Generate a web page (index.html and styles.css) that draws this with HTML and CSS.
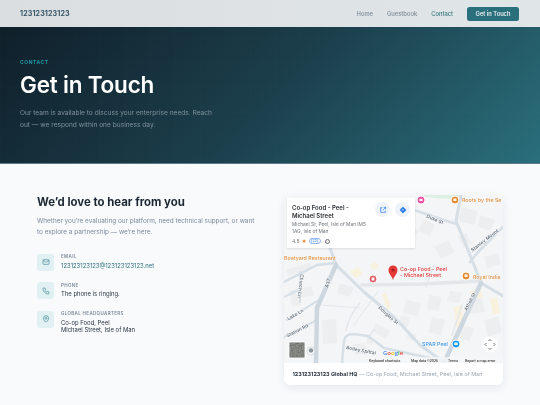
FILE: index.html
```html
<!DOCTYPE html>
<html lang="en">
<head>
<meta charset="utf-8">
<title>Contact</title>
<link rel="stylesheet" href="styles.css">
</head>
<body>
<header class="nav">
  <div class="brand">123123123123</div>
  <nav class="links">
    <a>Home</a>
    <a>Guestbook</a>
    <a class="active">Contact</a>
    <a class="cta">Get in Touch</a>
  </nav>
</header>
<section class="hero">
  <div class="eyebrow">CONTACT</div>
  <h1>Get in Touch</h1>
  <p>Our team is available to discuss your enterprise needs. Reach out — we respond within one business day.</p>
</section>
<main class="content">
  <div class="info">
    <h2>We’d love to hear from you</h2>
    <p class="lead">Whether you’re evaluating our platform, need technical support, or want to explore a partnership — we’re here.</p>
    <div class="items">
      <div class="item">
        <span class="ico"><svg viewBox="0 0 24 24"><rect x="3" y="5" width="18" height="14" rx="2"/><path d="M3 7l9 6 9-6"/></svg></span>
        <div><div class="lbl">EMAIL</div><div class="val link">123123123123@123123123123.net</div></div>
      </div>
      <div class="item">
        <span class="ico"><svg viewBox="0 0 24 24"><path d="M5 3h4l2 5-2.500 2a12 12 0 0 0 5.500 5.500L16 13l5 2v4a2 2 0 0 1-2 2A16 16 0 0 1 3 5a2 2 0 0 1 2-2z"/></svg></span>
        <div><div class="lbl">PHONE</div><div class="val">The phone is ringing.</div></div>
      </div>
      <div class="item">
        <span class="ico"><svg viewBox="0 0 24 24"><path d="M12 22s8-6.500 8-12a8 8 0 0 0-16 0c0 5.500 8 12 8 12z"/><circle cx="12" cy="10" r="3"/></svg></span>
        <div><div class="lbl">GLOBAL HEADQUARTERS</div><div class="val">Co-op Food, Peel<br>Michael Street, Isle of Man</div></div>
      </div>
    </div>
  </div>
  <div class="card">
    <div class="map">
      <svg class="mapsvg" viewBox="0 0 219 168">
        <defs>
          <filter id="sat" x="0" y="0" width="100%" height="100%">
            <feTurbulence type="fractalNoise" baseFrequency=".7" numOctaves="2" seed="4"/>
            <feColorMatrix values="0 0 0 0 .3  0 0 0 0 .31  0 0 0 0 .29  1.200 0 0 0 0"/>
            <feComposite in2="SourceGraphic" operator="over"/>
          </filter>
        </defs>
        <rect width="219" height="168" fill="#f4f5f6"/>
        <path d="M135 0h42l-5 3q-18 2-37-3z" fill="#dcefe3"/>
        <g fill="#eceef0">
          <path d="M178 12l16 4-4 14-16-4zM197 20l14 5-5 11-13-5zM150 52l14-7 7 12-14 7zM174 42l8-4 6 11-8 4zM200 62l14-4 3 11-14 4zM140 24l-6 12 12 5 5-11zM126 30l9 5-4 8-9-5z"/>
          <path d="M122 105l15 3-3 13-15-3zM145 100l12 2-2 14-12-2zM148 122l13 3-4 15-13-3zM117 120l9 3-3 10-9-3zM178 130l12 3-4 13-12-3zM182 105l16-2 3 14-16 2zM200 126l14-5 4 16-14 5zM125 137l8 3-3 6-8-3zM166 96l12 2-3 10-12-2z"/>
          <path d="M5 96l22-5 3 9-22 5zM2 75l24-8 2 6-24 8zM56 88l14 4-4 10-13-4zM6 104l8-2 3 8-8 2zM68 150l12-2 3 10-12 2zM92 128l14 8-4 8-14-8zM38 125l14-1 1 24-14 1zM84 142l6 2-2 6-6-2z"/>
        </g>
        <g fill="#f8f1de"><path d="M66 76l8-4 5 7-8 4zM86 70l6-3 3 5-6 3zM186 96l10-2 3 8-10 2zM206 104l7-2 3 16-7 2zM170 112l8-2 2 20-8 2zM98 100l4-3 5 15-4 3z"/></g>
        <g fill="none" stroke-linecap="round" stroke-linejoin="round">
          <g stroke="#e4e7ea">
            <path stroke-width="3.500" d="M78 90l60-1 59-3"/>
            <path stroke-width="1" d="M38 110l38 3M94 96l-24 34"/>
            <path stroke-width="1.500" d="M76 108q-12 14-14 28"/>
            <path stroke-width="1.500" d="M90 135l-6 8M150 70l-8 22M178 110l-10 30"/>
          </g>
          <g stroke="#d6dee6">
            <path stroke-width="3" d="M52 70l28 27 30 25 26 28 25 18"/>
            <path stroke-width="2.500" d="M0 87l33-17 19-2"/>
            <path stroke-width="3" d="M52 70l-6-17"/>
            <path stroke-width="3" d="M197 88l-13-33-12-29 5-26"/>
            <path stroke-width="3" d="M197 88l22 13"/>
            <path stroke-width="2.500" d="M130 15l42 14"/>
            <path stroke-width="2.500" d="M220 31l-26 26-8 10"/>
            <path stroke-width="2.500" d="M58 168l2-22q1-7 10-7l14 2 16 12 46 10"/>
            <path stroke-width="2" d="M0 142l33-17M3 125l30-19M16 77v30M0 102l16-8"/>
          </g>
          <path stroke="#cdd7e0" stroke-width="4.500" d="M52 70l-19 43-1 55"/>
          <path stroke="#cdd7e0" stroke-width="4.500" d="M197 88l-37 80"/>
        </g>
        <g class="road-lbl">
          <text transform="translate(142 22.500) rotate(22)">Duke St</text>
          <text transform="translate(188.500 57) rotate(-38)">Stanley Mount</text>
          <text transform="translate(183 116) rotate(-63)">Atholl St</text>
          <text transform="translate(16.500 79) rotate(97)">Church Ln</text>
          <text transform="translate(44 93) rotate(-75)">A37</text>
          <text transform="translate(4.500 125.500) rotate(-30)">Lake Ln</text>
          <text transform="translate(3.500 142.500) rotate(-27)">Station Rd</text>
          <text transform="translate(94 113) rotate(42)">Douglas St</text>
          <text transform="translate(62 154) rotate(11)">Bolley Spittal</text>
        </g>
        <g class="poi-o">
          <text x="0" y="65">Boatyard Restaurant</text>
          <text x="178" y="7">Roots by the Se</text>
          <text x="189" y="84">Royal India</text>
        </g>
        <g class="poi-r"><text x="116" y="75.500">Co-op Food - Peel</text><text x="116" y="81.500">- Michael Street</text></g>
        <text class="poi-b" x="138" y="151">SPAR Peel</text>
        <g stroke="#fff" stroke-width="1">
          <circle cx="171" cy="5" r="4" fill="#e8892f"/>
          <circle cx="182" cy="81" r="4" fill="#e8892f"/>
          <circle cx="137" cy="5" r="4" fill="#e84fa8"/>
          <circle cx="172" cy="149" r="4" fill="#1f93e6"/>
          <circle cx="89" cy="84" r="4" fill="#e2606a"/>
        </g>
        <g fill="#fff">
          <rect x="169.500" y="3.500" width="3" height="2.500"/>
          <rect x="180.500" y="79.500" width="3" height="2.500"/>
          <rect x="135.500" y="3.800" width="3" height="2.200"/>
          <rect x="170.300" y="147.500" width="3.400" height="2.600"/>
          <rect x="87.700" y="82.500" width="2.600" height="3"/>
        </g>
        <path d="M109 85c-1-4-4.500-6-4.500-10a4.500 4.500 0 0 1 9 0c0 4-3.500 6-4.500 10z" fill="#e53935"/>
        <circle cx="109" cy="75" r="1.500" fill="#a52020"/>
        <rect x="5" y="147" width="16" height="16" fill="#565854" filter="url(#sat)"/>
        <rect x="5" y="147" width="16" height="16" fill="none" stroke="#fff" stroke-width=".8"/>
        <circle cx="27" cy="156" r="4" fill="#fff" stroke="#c5cbd0" stroke-width=".7"/>
        <circle cx="27" cy="155.500" r="2.300" fill="#8a96a0"/>
        <text class="glogo" x="99" y="160"><tspan fill="#4285f4">G</tspan><tspan fill="#ea4335">o</tspan><tspan fill="#fbbc05">o</tspan><tspan fill="#4285f4">g</tspan><tspan fill="#34a853">l</tspan><tspan fill="#ea4335">e</tspan></text>
        <rect x="84" y="162" width="135" height="6" fill="#f5f6f7" opacity=".8"/>
        <g class="attrib">
          <text x="85" y="166.500">Keyboard shortcuts</text>
          <text x="127" y="166.500">Map data ©2026</text>
          <text x="164" y="166.500">Terms</text>
          <text x="181" y="166.500">Report a map error</text>
        </g>
        <circle cx="206" cy="149.500" r="8" fill="#fff"/>
        <path d="M204.500 146l1.500-1.500 1.500 1.500M204.500 153l1.500 1.500 1.500-1.500M202.500 148l-1.500 1.500 1.500 1.500M209.500 148l1.500 1.500-1.500 1.500" fill="none" stroke="#555" stroke-width=".8"/>
      </svg>
      <div class="place">
        <div class="place-head">
          <div class="place-title">Co-op Food - Peel - Michael Street</div>
          <span class="round"><svg viewBox="0 0 24 24"><path d="M10 5H5v14h14v-5M14 4h6v6M20 4l-9 9"/></svg></span>
          <span class="round"><svg viewBox="0 0 24 24"><path class="solid" d="M12 2l10 10-10 10L2 12z"/><path class="wh" d="M9 15v-4h5M12 8.500l2.500 2.500-2.500 2.500"/></svg></span>
        </div>
        <div class="place-addr">Michael St, Peel, Isle of Man IM5 1AG, Isle of Man</div>
        <div class="place-rate"><span>4.5</span><span class="star">★</span><span class="rev">(22)</span><span class="inf">i</span></div>
      </div>
    </div>
    <div class="caption"><b>123123123123 Global HQ</b> — Co-op Food, Michael Street, Peel, Isle of Man</div>
  </div>
</main>
</body>
</html>
```
FILE: styles.css
```css
* { box-sizing: border-box; }
html, body { margin: 0; padding: 0; }
html { background: #f8fafc; }
body { width: 540px; height: 405px; overflow: hidden; font-family: Inter, "Liberation Sans", sans-serif; filter: blur(.3px); }

.nav { height: 27px; display: flex; align-items: center; justify-content: space-between; padding: 0 21px 0 20px; background: linear-gradient(90deg, #dbdee0, #e0e6e8); }
.brand { font-size: 7.100px; font-weight: 700; color: #35566a; letter-spacing: .1px; }
.links { display: flex; align-items: center; gap: 14px; font-size: 5.800px; font-weight: 500; color: #7f8c99; }
.links .active { color: #35757f; }
.cta { display: block; background: #2a6f7c; color: #fff; width: 52px; text-align: center; height: 14px; line-height: 14px; border-radius: 2.500px; }

.hero { height: 137px; padding: 32px 20px 0; border-bottom: 1px solid #5d7a88;
  background:
    repeating-linear-gradient(90deg, rgba(255,255,255,.008) 0 1px, transparent 1px 25px),
    repeating-linear-gradient(0deg, rgba(255,255,255,.008) 0 1px, transparent 1px 25px),
    linear-gradient(135deg, #0f1f2a 0%, #1c3f4c 50%, #2a6f7c 100%); }
.eyebrow { font-size: 5px; font-weight: 700; letter-spacing: .55px; color: #1f9aa8; line-height: 7px; }
.hero h1 { margin: 5px 0 0; font-size: 22.500px; line-height: 28px; font-weight: 600; color: #fff; letter-spacing: -.2px; }
.hero p { margin: 9px 0 0; width: 200px; font-size: 6.600px; line-height: 11.700px; color: #7f929c; }

.content { display: grid; grid-template-columns: 219px 219px; column-gap: 28px; padding: 31px 37px 0; }
.info h2 { margin: 0; font-size: 11.400px; line-height: 15px; font-weight: 700; color: #1d2733; }
.lead { margin: 5.500px 0 0; font-size: 6.400px; line-height: 11px; color: #7d8a9a; }
.items { margin-top: 16px; display: flex; flex-direction: column; gap: 11.700px; }
.item { display: flex; gap: 7px; }
.ico { flex: none; width: 17px; height: 17px; border-radius: 3px; background: #e0f0f3; display: flex; align-items: center; justify-content: center; }
.ico svg { width: 8px; height: 8px; fill: none; stroke: #2a7a88; stroke-width: 1.700; }
.lbl { font-size: 4.500px; font-weight: 600; letter-spacing: .35px; color: #7d8a9a; line-height: 6px; margin-top: .500px; }
.val { font-size: 5.900px; line-height: 7.300px; color: #2b3644; margin-top: 1.500px; }
.val.link { color: #2a6f7c; }

.card { width: 219px; height: 190px; background: #fff; border-radius: 6px; overflow: hidden; box-shadow: 0 3px 10px rgba(20,40,60,.08); }
.map { position: relative; height: 168px; }
.mapsvg { display: block; width: 219px; height: 168px; }
.road-lbl text { font: 600 4.800px Inter, sans-serif; fill: #66727f; stroke: #fff; stroke-width: .8px; paint-order: stroke; }
.poi-o text { font: 500 5.300px Inter, sans-serif; fill: #dd8c3f; stroke: #fff; stroke-width: .6px; paint-order: stroke; }
.poi-r text { font: 500 5.400px Inter, sans-serif; fill: #d93636; stroke: #fff; stroke-width: .6px; paint-order: stroke; }
.poi-b { font: 500 5.300px Inter, sans-serif; fill: #3a93de; stroke: #fff; stroke-width: .6px; paint-order: stroke; }
.glogo { font: 600 6px "Open Sans", sans-serif; }
.attrib text { font: 500 3.600px Roboto, sans-serif; fill: #444; }

.place { position: absolute; left: 3px; top: 3px; width: 128px; height: 50px; background: #fff; padding: 4px 5px 0; box-shadow: 0 1px 2px rgba(0,0,0,.1); }
.place-head { display: flex; align-items: flex-start; gap: 5px; height: 18px; }
.place-title { flex: 1; font-size: 6px; line-height: 8.500px; font-weight: 600; color: #2b2f33; margin-top: 1.500px; }
.round { flex: none; width: 15px; height: 15px; border-radius: 50%; background: #eef3fb; display: flex; align-items: center; justify-content: center; }
.round svg { width: 8px; height: 8px; fill: none; stroke: #1a73e8; stroke-width: 2; }
.round .solid { fill: #1a73e8; stroke: none; }
.round .wh { stroke: #fff; stroke-width: 1.500; }
.place-addr { width: 80px; font-size: 4.800px; line-height: 7px; color: #70757a; margin-top: 1px; }
.place-rate { display: flex; align-items: center; gap: 2px; margin-top: 2.500px; font-size: 5px; line-height: 7px; color: #70757a; }
.star { color: #e8842c; }
.rev { color: #1a73e8; border: .5px solid #8fb4ea; border-radius: 3px; padding: 0 1px; font-size: 4px; line-height: 4.500px; }
.inf { width: 5px; height: 5px; margin-left: 2px; border: .5px solid #70757a; border-radius: 50%; font-size: 3.500px; line-height: 4px; text-align: center; }

.caption { height: 22px; padding-left: 8.500px; font-size: 5.450px; line-height: 22px; color: #9aa5b2; white-space: nowrap; }
.caption b { color: #2b3644; font-weight: 700; }
```
